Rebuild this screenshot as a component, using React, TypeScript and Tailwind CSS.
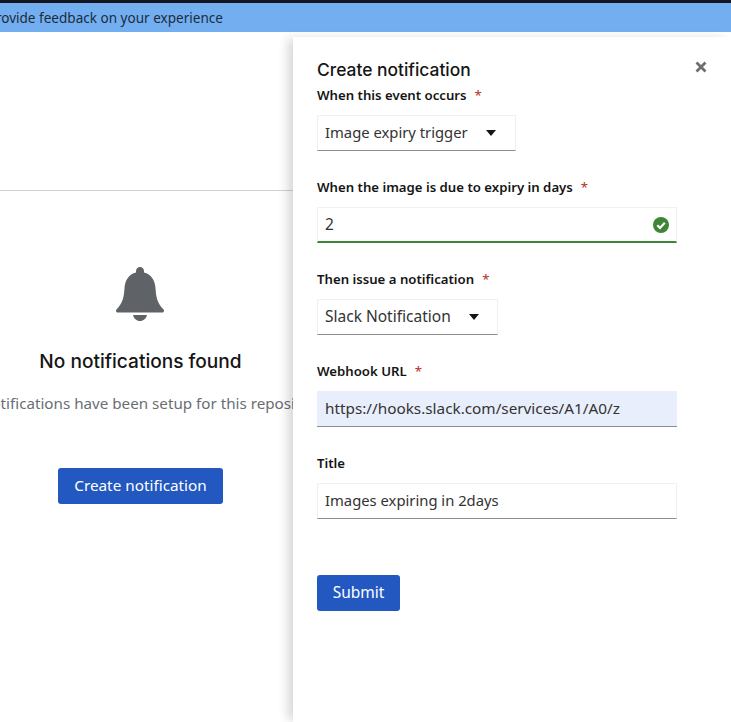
import React from "react";

const font = { fontFamily: '"Noto Sans", sans-serif' };

function Label({ text, required }: { text: string; required?: boolean }) {
  return (
    <div className="h-[21px] text-[13.2px] leading-[23px] font-semibold text-[#151515] whitespace-nowrap">
      {text}
      {required && <span className="ml-2 font-normal text-[#b3301f]">*</span>}
    </div>
  );
}

function Select({ text, w, gap, size }: { text: string; w: string; gap: string; size: string }) {
  return (
    <div className={`${w} h-[36px] flex items-center pl-[7px] pb-[1px] border border-[#f0f0f0] border-b-[#8a8d90] ${size} text-[#333] whitespace-nowrap`}>
      <span>{text}</span>
      <svg className={gap} width="10" height="6" viewBox="0 0 10 6">
        <path d="M0 0H10L5 6Z" fill="#151515" />
      </svg>
    </div>
  );
}

export default function App() {
  return (
    <div style={font} className="w-[731px] h-[722px] overflow-hidden bg-white flex flex-col">
      <div className="h-[3px] bg-[#15151f]" />
      <div className="h-[29px] pt-[1px] bg-[#73aff0] overflow-hidden flex items-center text-[13.55px] text-[#1b2b3b] whitespace-nowrap">
        <span className="-ml-[57px]">Please provide feedback on your experience</span>
      </div>
      <div className="flex-1 flex min-h-0">
        <div className="w-[293px] shrink-0 overflow-hidden flex flex-col">
          <div className="h-[159px] shrink-0 border-b border-[#d2d2d2]" />
          <div className="w-[281px] flex flex-col items-center">
            <svg className="mt-[76px] -ml-[2px]" width="48" height="54" viewBox="0 0 48 54">
              <path
                fill="#5f6368"
                d="M24 0c2.4 0 4 1.700 4 4v1.400C35 7 39 13 39.500 21c.5 8.500 1.500 15 8 21.500 1 1 .5 3-1.500 3H2c-2 0-2.500-2-1.500-3C7 36 8 29.500 8.500 21 9 13 13 7 20 5.400V4c0-2.300 1.600-4 4-4zM17 48h14c-.8 3.500-3.600 6-7 6s-6.200-2.500-7-6z"
              />
            </svg>
            <div className="mt-[25px] text-[19.1px] leading-[30px] font-medium text-[#151515] whitespace-nowrap" style={{ fontFamily: "Inter, sans-serif" }}>
              No notifications found
            </div>
            <div className="mt-[15px] text-[15.2px] leading-[24px] text-[#6a6e73] whitespace-nowrap">
              No notifications have been setup for this repository
            </div>
            <button className="mt-[53px] pb-[2px] w-[165px] h-[36px] rounded-[3px] bg-[#2258c0] text-white text-[15.3px]">
              Create notification
            </button>
          </div>
        </div>
        <div className="relative flex-1 min-w-0 mt-[5px] pl-[24px] pt-[19px] shadow-[-7px_0_10px_-2px_rgba(0,0,0,0.16)]">
          <svg className="absolute left-[402px] top-[24px]" width="12" height="12" viewBox="0 0 12 12">
            <path d="M1.500 1.500L10.500 10.500M10.500 1.500L1.500 10.500" stroke="#6a6e73" strokeWidth="2.800" />
          </svg>
          <div className="h-[28px] text-[17.4px] leading-[27px] font-medium text-[#151515]" style={{ fontFamily: "Inter, sans-serif" }}>
            Create notification
          </div>
          <div className="w-[360px] flex flex-col">
            <Label text="When this event occurs" required />
            <div className="mt-[10px]">
              <Select text="Image expiry trigger" w="w-[199px]" gap="ml-[18px]" size="text-[14.8px]" />
            </div>
            <div className="mt-[25px]">
              <Label text="When the image is due to expiry in days" required />
            </div>
            <div className="mt-[10px] h-[36px] flex items-center justify-between pl-[7px] pr-[7px] border border-[#f0f0f0] border-b-2 border-b-[#3e8635] text-[15.5px] text-[#333]">
              <span>2</span>
              <svg width="16" height="16" viewBox="0 0 16 16">
                <circle cx="8" cy="8" r="8" fill="#3e8635" />
                <path d="M4.300 8.300L7 11L11.800 5.800" fill="none" stroke="#fff" strokeWidth="2.200" />
              </svg>
            </div>
            <div className="mt-[25px]">
              <Label text="Then issue a notification" required />
            </div>
            <div className="mt-[10px]">
              <Select text="Slack Notification" w="w-[181px]" gap="ml-[18px]" size="text-[15.5px]" />
            </div>
            <div className="mt-[25px]">
              <Label text="Webhook URL" required />
            </div>
            <div className="mt-[10px] h-[36px] flex items-center pl-2 border-b border-[#8a8d90] bg-[#e8eefb] text-[15.3px] text-[#333]">
              https://hooks.slack.com/services/A1/A0/z
            </div>
            <div className="mt-[25px]">
              <Label text="Title" />
            </div>
            <div className="mt-[10px] h-[36px] flex items-center pl-[7px] pb-[1px] border border-[#f0f0f0] border-b-[#8a8d90] text-[14.8px] text-[#333]">
              Images expiring in 2days
            </div>
            <button className="mt-[56px] w-[83px] h-[36px] rounded-[3px] bg-[#2258c0] text-white text-[15.5px]">
              Submit
            </button>
          </div>
        </div>
      </div>
    </div>
  );
}
